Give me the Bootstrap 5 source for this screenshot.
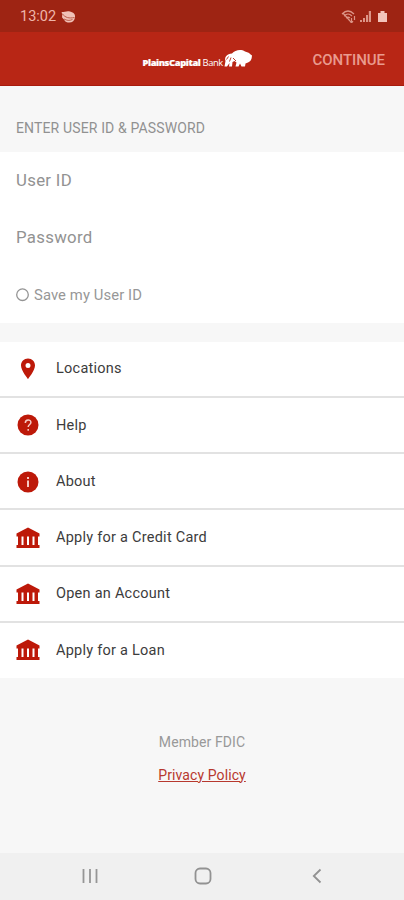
<!DOCTYPE html>
<html lang="en">
<head>
<meta charset="utf-8">
<meta name="viewport" content="width=device-width, initial-scale=1">
<title>PlainsCapital Bank</title>
<link href="https://cdn.jsdelivr.net/npm/bootstrap@5.3.0/dist/css/bootstrap.min.css" rel="stylesheet">
<style>
body{font-family:Roboto,"Liberation Sans",sans-serif;background:#f7f7f7;height:900px;overflow:hidden;color:#3c3c3c}
svg{display:block;flex:none}
.status{height:32px;background:#9e2413;color:#eeb5aa;padding:1px 17px 0 20px;font-size:14.5px;line-height:32px}
.topbar{height:54px;background:#b82615;border-bottom:1px solid #a81b0d;padding:1px 19px 0 142.5px}
.brand-name{font:800 9.4px/14px "Open Sans",sans-serif;letter-spacing:-.4px;color:#fff;-webkit-text-stroke:.2px #fff}
.brand-name span{font-weight:400;-webkit-text-stroke:0}
.continue{color:#e99b8e;font-size:15px;font-weight:500;line-height:20px;letter-spacing:-.05px;padding-top:1px}
.section-title{height:66px;padding:18px 16px 0;font-size:14px;color:#919191;letter-spacing:.14px}
.fields{height:171px}
.field{height:56.5px;padding:0 16px;border:0;background:transparent;color:#6c6c6c;font-size:16.8px;width:100%;outline:0;letter-spacing:.3px}
.field::placeholder{color:#929292;opacity:1}
.save{height:58px;padding:3px 16px 0;font-size:14.8px;color:#979797;gap:5px;letter-spacing:.1px}
.menu{margin-top:18.5px;height:336.5px}
.menu a{height:56.25px;padding:1px 15px 0;border-bottom:2px solid #e2e2e2;color:#3c3c3c;font-size:14.5px;gap:15px;letter-spacing:.25px}
.menu a:last-child{border-bottom-color:transparent}
.menu svg{fill:#bd1909}
.foot{height:175px;padding-top:53.5px;font-size:14px;color:#999;letter-spacing:.1px}
.foot a{color:#b7382e;line-height:21px}
.foot div{line-height:21px;margin-bottom:12px}
.navkeys{height:47px;background:#f0f0f0;padding:0 82px 1px}
</style>
<script src="https://cdn.jsdelivr.net/npm/bootstrap@5.3.0/dist/js/bootstrap.bundle.min.js"></script>
</head>
<body class="d-flex flex-column">
<svg width="0" height="0" class="position-absolute"><defs>
<symbol id="bank" viewBox="0 0 26 24"><path d="M13 1.500 24.500 7.500v3h-23v-3zM1.500 19h23v3h-23zM3 10h3.500v9H3zM8.500 10H12v9H8.500zM14 10h3.500v9H14zM19.500 10H23v9h-3.500z"/></symbol>
</defs></svg>
<div class="status d-flex align-items-center flex-shrink-0">
  <span>13:02</span>
  <svg class="ms-1" width="17" height="14" viewBox="0 0 17 14"><path d="M1.500 2C5 2 7 .5 10 1.500c4 1 5.500 3 5 6C14.500 11 12 13 8 12.500 4.500 12 5 10 2.500 8 1.500 7 3 5 1.500 2z" fill="#f1c2b8"/><path d="M2 3.500c3.500 4.500 7 5 12.500 4M4 9c3 1.500 5 2 8.500.5" fill="none" stroke="#b4513e" stroke-width=".9"/></svg>
  <div class="d-flex align-items-end ms-auto">
    <svg width="16" height="13" viewBox="0 0 16 13" fill="none" stroke="#dc9587" stroke-width="1.200"><path d="M1 4c4-4 8-4 12 0M3 6c3-2.700 5-2.700 8 0M5 8c1.500-1.300 2.500-1.300 4 0M2 3l7 8M10.500 8v5M13.500 6v4M9 11l1.500 2 1.500-2"/></svg>
    <svg style="margin-left:3px" width="12" height="13" viewBox="0 0 12 13" fill="#dc9587"><path d="M0 10h2v2H0zM3 8h2v4H3zM6 5h2v7H6zM8.800 1h2.200v11H8.800z"/></svg>
    <svg style="margin-left:6px" width="9" height="13" viewBox="0 0 9 13" fill="#f3c4bb"><path d="M2.500 1h4v2H9v9H0V3h2.500z"/></svg>
  </div>
</div>
<header class="topbar d-flex align-items-center flex-shrink-0">
  <div class="d-flex align-items-center">
    <div class="brand-name text-nowrap pt-2">PlainsCapital<span> Bank</span></div>
    <svg width="30" height="20" viewBox="0 0 30 20"><path d="M2.500 12C1 8 4 5 9 4.500c3-3.500 9-4.500 13-2 2 1 4 .8 5 2.500l2 1.500c-.2 4-1.500 6-4 7l-2.500 1L22 17.500h-3.500L17 14.500l-1.500 3h-3l1-4-2-1.500-2 1-.5 4.500H6L6.500 14 4 17.500H1.500z" fill="#fff"/><path d="M3.500 10.500l2-3M8 8.500l-1.500 4M10 9l3 3" stroke="#b82615" stroke-width=".9" fill="none"/></svg>
  </div>
  <span class="continue ms-auto">CONTINUE</span>
</header>
<main class="d-flex flex-column">
  <div class="section-title d-flex align-items-center">ENTER USER ID &amp; PASSWORD</div>
  <form class="fields bg-white d-flex flex-column">
    <input class="field" type="text" placeholder="User ID" aria-label="User ID">
    <input class="field" type="password" placeholder="Password" aria-label="Password">
    <div class="save d-flex align-items-center"><svg width="13" height="15" viewBox="0 0 13 15"><circle cx="6.500" cy="6.700" r="5.800" fill="none" stroke="#949494" stroke-width="1.300"/></svg><span>Save my User ID</span></div>
  </form>
  <nav class="menu bg-white">
    <a href="#" class="d-flex align-items-center text-decoration-none"><svg width="26" height="24" viewBox="0 0 26 24"><path fill-rule="evenodd" d="M13 1.500C9 1.500 6 4.500 6 8.500c0 5 7 13.500 7 13.500s7-8.500 7-13.500c0-4-3-7-7-7zm0 4.500a2.500 2.500 0 1 1 0 5 2.500 2.500 0 0 1 0-5z"/></svg>Locations</a>
    <a href="#" class="d-flex align-items-center text-decoration-none"><svg width="26" height="24" viewBox="0 0 26 24"><circle cx="13" cy="12" r="10.500"/><path d="M10.300 10c0-4 5.600-4 5.600-.6 0 2-2.700 2.200-2.700 4.600M13.200 16v1.800" fill="none" stroke="#f5c9c4" stroke-width="1.500"/></svg>Help</a>
    <a href="#" class="d-flex align-items-center text-decoration-none"><svg width="26" height="24" viewBox="0 0 26 24"><circle cx="13" cy="12" r="10.500"/><path d="M13 7v2M13 10.500v6.500" fill="none" stroke="#f5c9c4" stroke-width="2"/></svg>About</a>
    <a href="#" class="d-flex align-items-center text-decoration-none"><svg width="26" height="24"><use href="#bank"/></svg>Apply for a Credit Card</a>
    <a href="#" class="d-flex align-items-center text-decoration-none"><svg width="26" height="24"><use href="#bank"/></svg>Open an Account</a>
    <a href="#" class="d-flex align-items-center text-decoration-none"><svg width="26" height="24"><use href="#bank"/></svg>Apply for a Loan</a>
  </nav>
  <footer class="foot text-center"><div>Member FDIC</div><a href="#">Privacy Policy</a></footer>
</main>
<div class="navkeys d-flex align-items-center justify-content-between flex-shrink-0">
  <svg width="16" height="16" viewBox="0 0 16 16"><path d="M1.500 1v14M8 1v14M14.500 1v14" stroke="#969696" stroke-width="1.800"/></svg>
  <svg class="me-1" width="18" height="18" viewBox="0 0 18 18"><rect x="1.500" y="1.500" width="15" height="15" rx="4.500" fill="none" stroke="#929292" stroke-width="1.800"/></svg>
  <svg width="10" height="16" viewBox="0 0 10 16"><path d="M8.500 1.500 1.800 8l6.700 6.500" fill="none" stroke="#929292" stroke-width="1.800"/></svg>
</div>
</body>
</html>
